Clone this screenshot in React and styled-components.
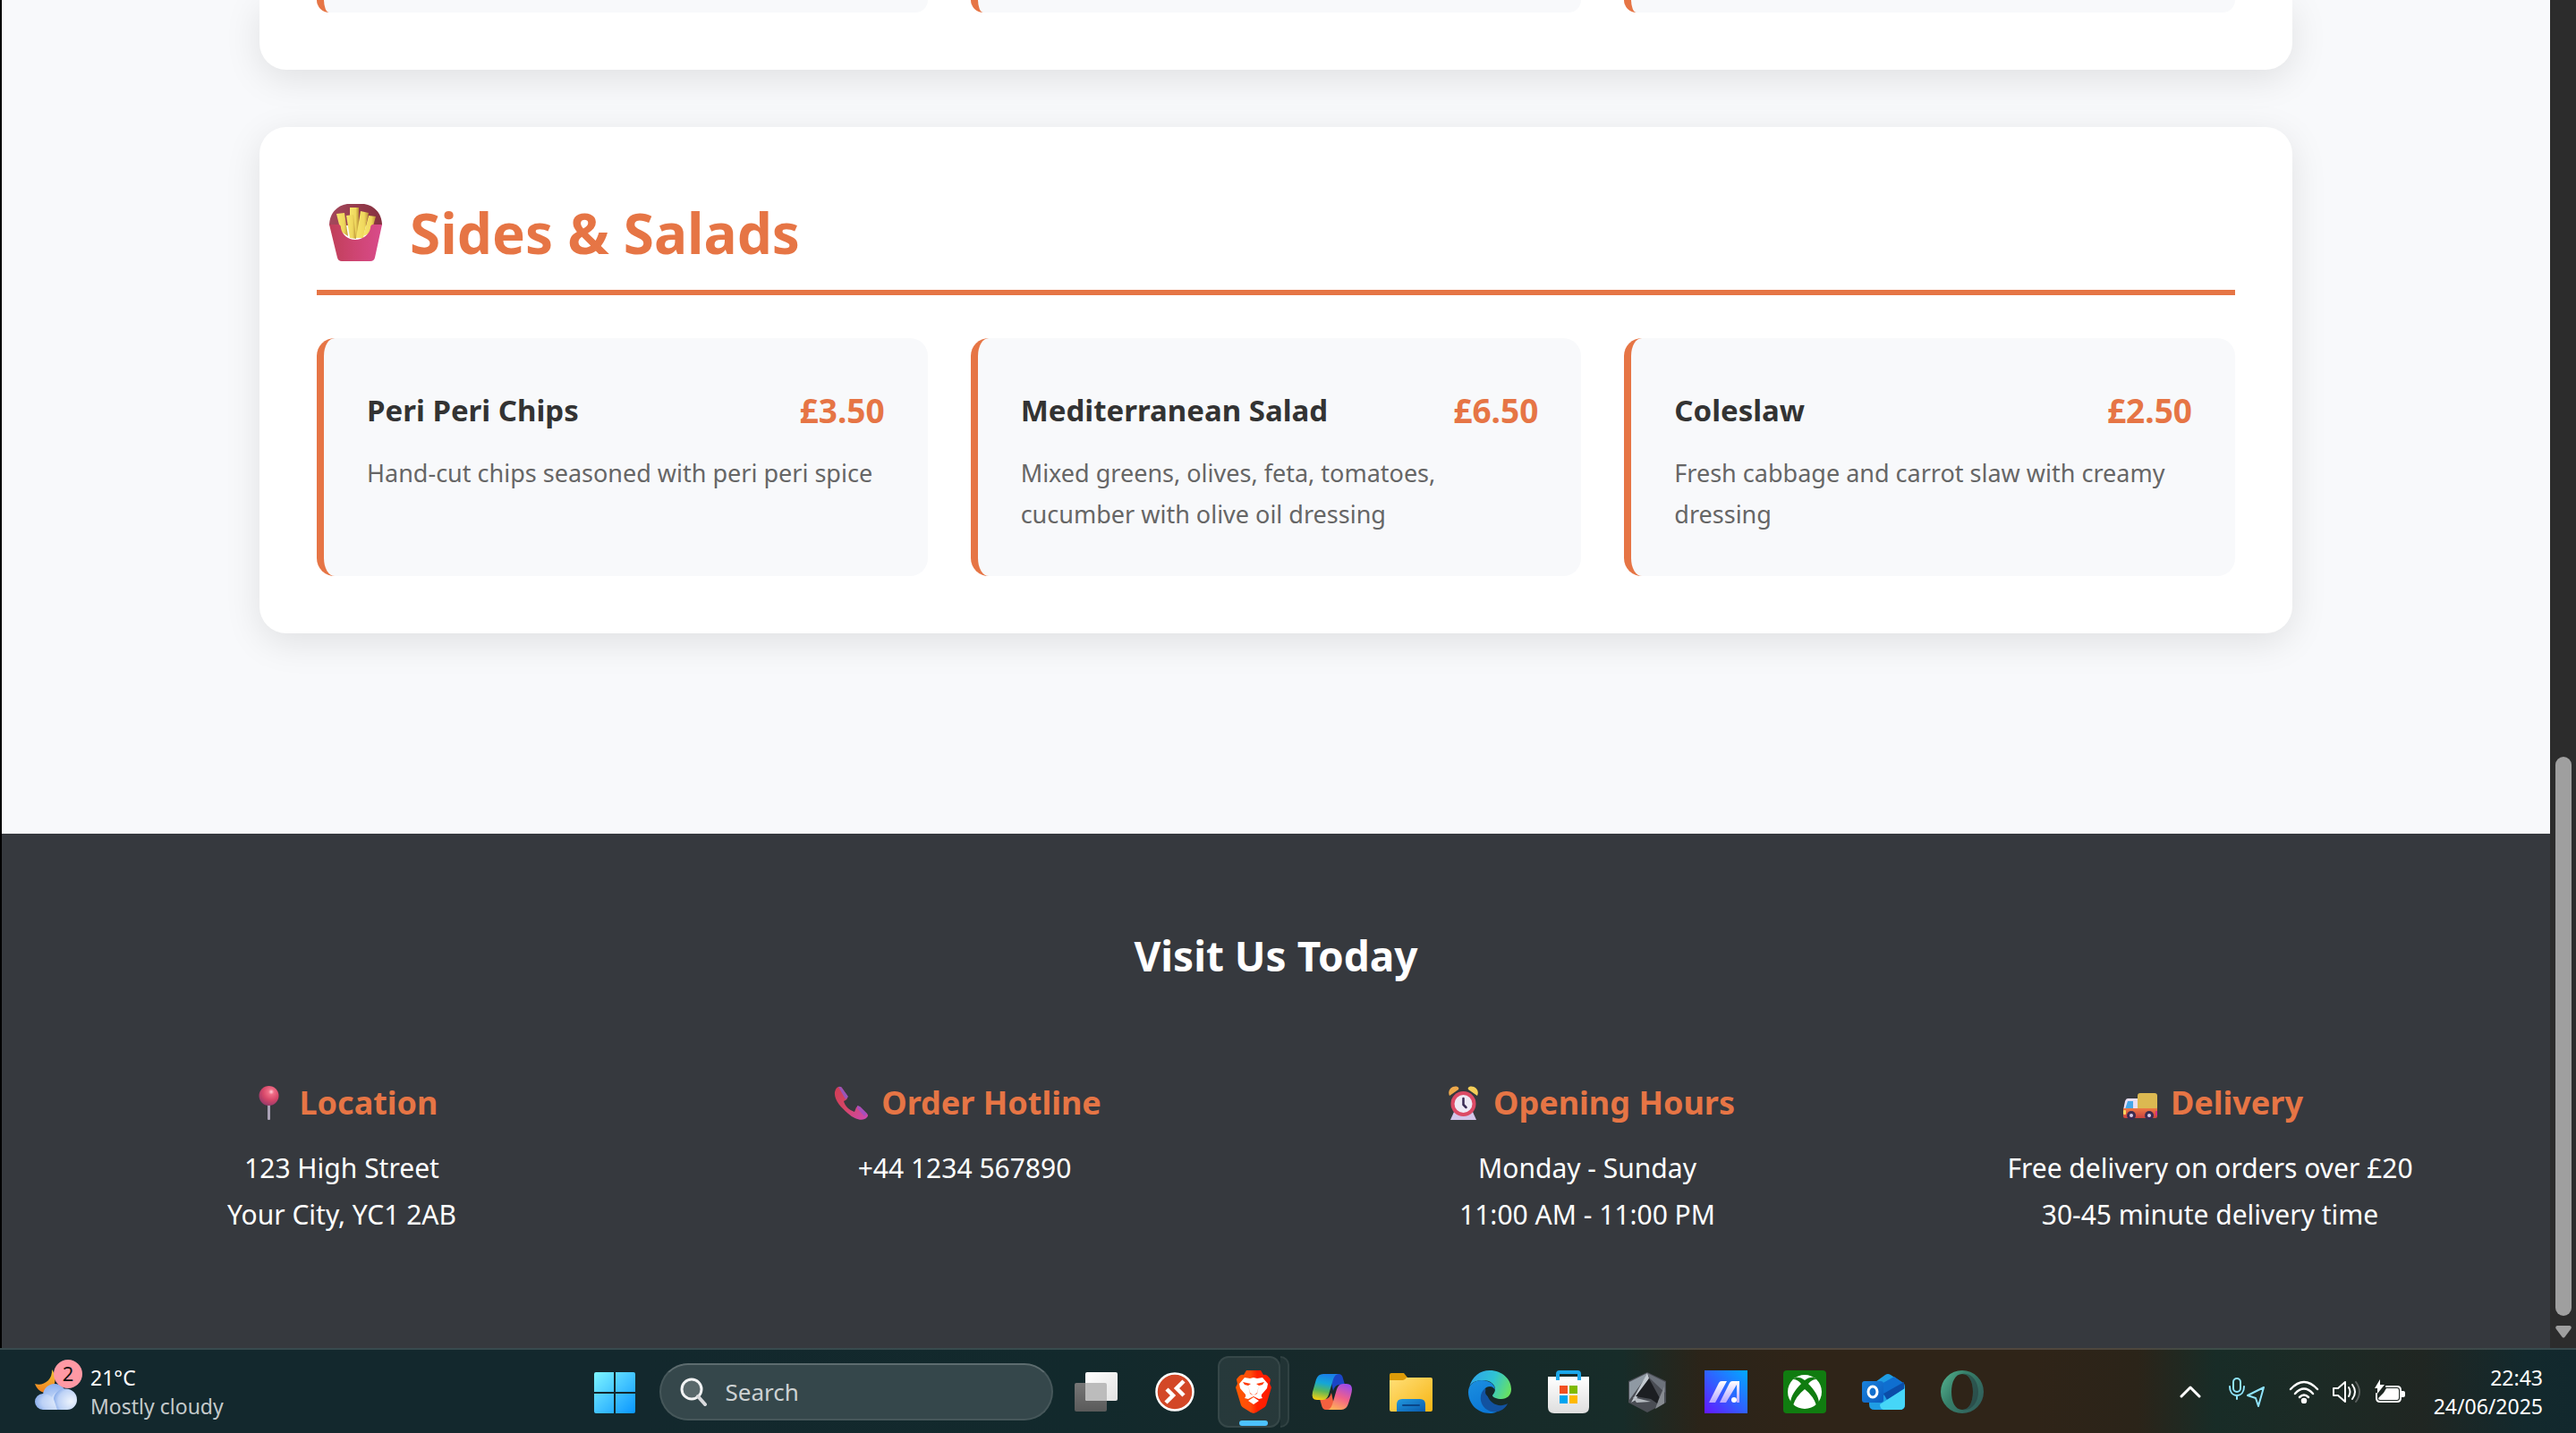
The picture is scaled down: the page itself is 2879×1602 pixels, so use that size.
import React from "react";
import styled, { createGlobalStyle } from "styled-components";

const orange = "#e67545";
const pageGrey = "#f8f9fb";
const charcoal = "#36393e";

const GlobalStyle = createGlobalStyle`
  *, *::before, *::after { box-sizing: border-box; }
  body { margin: 0; font-family: "Noto Sans", "Open Sans", sans-serif; color: #333; }
  h2, h3, h4, p { margin: 0; }
  button, input { font: inherit; }
`;

/* ---------- shell ---------- */

const Desktop = styled.div`
  height: 100vh;
  display: flex;
  flex-direction: column;
  overflow: hidden;
`;

const Window = styled.div`
  flex: 1;
  min-height: 0;
  display: flex;
  border-left: 2px solid #000;
`;

const Page = styled.div`
  flex: 1;
  min-width: 0;
  display: flex;
  flex-direction: column;
  overflow: hidden;
  background: ${pageGrey};
`;

const Scrollbar = styled.div`
  width: 29px;
  display: flex;
  flex-direction: column;
  align-items: center;
  background: #2c2c2c;
`;

const Track = styled.div`
  flex: 1;
  display: flex;
  flex-direction: column;
  justify-content: flex-end;
  width: 18px;
`;

const Thumb = styled.div`
  height: 42.5%;
  border-radius: 9px;
  background: #9f9f9f;
`;

const ScrollButton = styled.button`
  height: 36px;
  width: 18px;
  padding: 0;
  border: 0;
  background: none;
  display: grid;
  place-items: center;
`;

/* ---------- menu ---------- */

const Menu = styled.main`
  width: 100%;
  max-width: 2400px;
  margin: 0 auto;
  padding: 0 64px 160px;
`;

const Category = styled.section`
  margin-bottom: 64px;
  padding: ${(p) => (p.$cut ? "0 64px 64px" : "64px")};
  border-radius: ${(p) => (p.$cut ? "0 0 30px 30px" : "30px")};
  background: #fff;
  box-shadow: 0 10px 40px rgba(0, 0, 0, 0.1);
`;

const CategoryTitle = styled.h2`
  display: flex;
  align-items: center;
  gap: 16px;
  margin-bottom: 48px;
  padding-bottom: 10px;
  border-bottom: 6px solid ${orange};
  color: ${orange};
  font-size: 62px;
  line-height: 108px;
  font-weight: 700;
`;

const Items = styled.div`
  display: grid;
  grid-template-columns: repeat(3, 1fr);
  gap: 48px;
`;

const Item = styled.article`
  padding: 50px 48px 46px;
  border-left: 8px solid ${orange};
  border-radius: 20px;
  background: ${pageGrey};
`;

const ItemTail = styled.div`
  height: 14px;
  border-left: 8px solid ${orange};
  border-radius: 0 0 20px 20px;
  background: ${pageGrey};
`;

const ItemHead = styled.div`
  display: flex;
  justify-content: space-between;
  align-items: center;
  margin-bottom: 16px;
`;

const ItemName = styled.h3`
  font-size: 33px;
  line-height: 56px;
  font-weight: 700;
`;

const Price = styled.span`
  color: ${orange};
  font-size: 37px;
  line-height: 62px;
  font-weight: 700;
`;

const Description = styled.p`
  color: #666;
  font-size: 27px;
  line-height: 46px;
`;

/* ---------- footer ---------- */

const Footer = styled.footer`
  flex: 1;
  padding: 98px 64px 96px;
  background: ${charcoal};
  color: #fff;
  text-align: center;
`;

const FooterTitle = styled.h2`
  margin-bottom: 96px;
  font-size: 46px;
  line-height: 76px;
  font-weight: 700;
`;

const Contacts = styled.div`
  display: grid;
  grid-template-columns: repeat(4, 1fr);
  gap: 64px;
`;

const ContactTitle = styled.h3`
  display: flex;
  justify-content: center;
  align-items: center;
  gap: 8px;
  margin-bottom: 16px;
  color: ${orange};
  font-size: 36px;
  line-height: 62px;
  font-weight: 700;
`;

const ContactLine = styled.p`
  font-size: 30px;
  line-height: 52px;
`;

/* ---------- taskbar ---------- */

const Bar = styled.nav`
  display: grid;
  grid-template-columns: 1fr auto 1fr;
  align-items: center;
  height: 95px;
  border-top: 2px solid rgba(255, 255, 255, 0.16);
  background: linear-gradient(90deg, #13282d 0%, #13282d 25%, #12292c 42%, #17292a 52%, #172c29 63%, #2b2419 66%, #2f2418 70%, #2f2418 79%, #2b2419 83%, #182c27 86%, #1c2a25 90%, #202622 94%, #13292d 98%, #12282d 100%);
  color: #fff;
`;

const Weather = styled.button`
  justify-self: start;
  display: flex;
  align-items: center;
  gap: 8px;
  margin-left: 36px;
  padding: 0;
  border: 0;
  background: none;
  color: #fff;
  text-align: left;
`;

const SmallText = styled.span`
  display: block;
  font-size: 23px;
  line-height: 32px;
  color: ${(p) => (p.$dim ? "#c4cacb" : "#fff")};
`;

const Apps = styled.div`
  display: flex;
  align-items: center;
`;

const AppButton = styled.button`
  display: grid;
  place-items: center;
  width: 88px;
  height: 80px;
  padding: 0;
  border: 0;
  background: none;
`;

const ActiveSlot = styled.div`
  position: relative;
  display: flex;
  width: 80px;
  height: 80px;
  margin: 0 4px;
`;

const ActiveApp = styled.button`
  width: 70px;
  height: 80px;
  padding: 0 0 0 10px;
  display: grid;
  place-items: center;
  border: 2px solid rgba(255, 255, 255, 0.07);
  border-radius: 12px;
  background: rgba(255, 255, 255, 0.08);
  &::after {
    content: "";
    position: absolute;
    left: 24px;
    bottom: 2px;
    width: 32px;
    height: 6px;
    border-radius: 3px;
    background: #4cc2ff;
  }
`;

const StackEdge = styled.span`
  width: 10px;
  border: 2px solid rgba(255, 255, 255, 0.07);
  border-left: 0;
  border-radius: 0 12px 12px 0;
  background: rgba(255, 255, 255, 0.05);
`;

const SearchBox = styled.label`
  display: flex;
  align-items: center;
  gap: 20px;
  width: 440px;
  height: 64px;
  margin: 0 4px 0 6px;
  padding: 0 20px;
  border: 2px solid #46575a;
  border-top-color: #5d6c6f;
  border-radius: 32px;
  background: #35474b;
`;

const SearchInput = styled.input`
  flex: 1;
  min-width: 0;
  padding: 0;
  border: 0;
  outline: 0;
  background: none;
  color: #fff;
  font-size: 26px;
  line-height: 36px;
  &::placeholder { color: #cdd2d3; opacity: 1; }
`;

const Tray = styled.div`
  justify-self: end;
  display: flex;
  align-items: center;
  gap: 14px;
  margin-right: 37px;
`;

const TrayButton = styled.button`
  display: flex;
  align-items: center;
  gap: 14px;
  padding: 0;
  border: 0;
  background: none;
  margin-right: ${(p) => p.$space || 0}px;
`;

const Clock = styled.time`
  text-align: right;
`;

/* ---------- emoji drawings ---------- */

const Fries = () => (
  <svg width="88" height="64" viewBox="0 0 88 64" aria-hidden="true">
    <defs>
      <linearGradient id="fBox" x1="0" x2="1"><stop offset="0" stopColor="#c03f58" /><stop offset=".45" stopColor="#cd4470" /><stop offset="1" stopColor="#d94b8b" /></linearGradient>
      <linearGradient id="fBack" x1="0" x2="1"><stop offset="0" stopColor="#a5485c" /><stop offset="1" stopColor="#85303f" /></linearGradient>
      <linearGradient id="fFry" x1="0" x2="1"><stop offset="0" stopColor="#f7e66c" /><stop offset=".65" stopColor="#efd75d" /><stop offset="1" stopColor="#b98f35" /></linearGradient>
    </defs>
    <path d="M14 24C14 9 25 0 36 0h15C62 0 73 9 73 24Z" fill="url(#fBack)" />
    <path d="m22 11 9-1 4 26-8-5Z" fill="url(#fFry)" />
    <path d="M37 4h10v34H37Z" fill="url(#fFry)" />
    <path d="m49 8 9 2-6 28h-8Z" fill="url(#fFry)" />
    <path d="m58 13 8 1-5 18-9 4Z" fill="url(#fFry)" />
    <path d="m33 13 8-1 3 27-7-1Z" fill="url(#fFry)" />
    <path d="M14 23h10q3 0 3 4c1 7 8 13 16 13s16-6 17-13q0-4 3-4h10l-8 37q-1 4-5 4H28q-4 0-5-4Z" fill="url(#fBox)" />
  </svg>
);

const Pin = () => (
  <svg width="52" height="38" viewBox="0 0 52 38" aria-hidden="true">
    <defs><radialGradient id="pinBall" cx=".62" cy=".3" r=".7"><stop offset="0" stopColor="#ffd0da" /><stop offset=".2" stopColor="#ef6d86" /><stop offset=".6" stopColor="#d64769" /><stop offset="1" stopColor="#9e3a6a" /></radialGradient></defs>
    <rect x="25" y="20" width="3" height="18" rx="1" fill="#aaa2b6" />
    <circle cx="26.500" cy="11" r="11" fill="url(#pinBall)" />
  </svg>
);

const Phone = () => (
  <svg width="52" height="38" viewBox="0 0 52 38" aria-hidden="true">
    <defs><linearGradient id="phoneFill" x1="0" y1="0" x2="1" y2="1"><stop offset="0" stopColor="#cf3c55" /><stop offset=".5" stopColor="#d64667" /><stop offset="1" stopColor="#cb48b4" /></linearGradient></defs>
    <path d="M12 1q2-1 4 1l6 9q1 3-2 5l-2 1c1 5 6 10 12 12l2-5q2-3 5 0l7 7q2 2 0 4c-4 5-13 3-21-4S7 16 8 7q1-5 4-6Z" fill="url(#phoneFill)" />
    <path d="m12 1 3 0 8 11-3 3Z" fill="#9a55b8" />
    <path d="m33 22 3 1 8 8-3 3-8-9Z" fill="#a64fbc" />
  </svg>
);

const Alarm = () => (
  <svg width="52" height="38" viewBox="0 0 52 38" aria-hidden="true">
    <path d="m12 38 4-9h21l4 9Z" fill="#d3c5ea" />
    <path d="M11 11C8 5 14-1 20 1q2 1 1 3Z" fill="#efa94b" />
    <path d="M42 11C45 5 39-1 33 1q-2 1-1 3Z" fill="#f5cf58" />
    <circle cx="26.500" cy="20" r="14" fill="#dc4a66" />
    <circle cx="26.500" cy="20" r="10" fill="#efe9f6" />
    <path d="M26.500 14v7l3 3" fill="none" stroke="#3b2b55" strokeWidth="2.500" strokeLinecap="round" />
  </svg>
);

const Truck = () => (
  <svg width="52" height="38" viewBox="0 0 52 38" aria-hidden="true">
    <defs><linearGradient id="truckBase" x1="0" y1="0" x2="0" y2="1"><stop offset="0" stopColor="#ee7a44" /><stop offset="1" stopColor="#c9403f" /></linearGradient></defs>
    <path d="M12 14h12v13H7l2-10q1-3 3-3Z" fill="#e9dff3" />
    <path d="M12 17h6v9H9Z" fill="#46a7e8" />
    <rect x="23" y="8" width="22" height="19" rx="3" fill="#dcb951" />
    <path d="M7 25h38v9q0 2-2 2H9q-2 0-2-2Z" fill="url(#truckBase)" />
    <rect x="7" y="27" width="3" height="5" rx="1" fill="#ffd45e" />
    <rect x="43" y="28" width="2" height="5" fill="#d92f83" />
    <circle cx="16" cy="33" r="5" fill="#3a2c52" /><circle cx="16" cy="33" r="2" fill="#d7cbe8" />
    <circle cx="36" cy="33" r="5" fill="#3a2c52" /><circle cx="36" cy="33" r="2" fill="#d7cbe8" />
  </svg>
);

/* ---------- taskbar drawings ---------- */

const WeatherIcon = () => (
  <svg width="57" height="72" viewBox="0 0 57 72" aria-hidden="true">
    <defs>
      <linearGradient id="moon" x1="0" y1="0" x2="0" y2="1"><stop offset="0" stopColor="#f4c63c" /><stop offset="1" stopColor="#f07f1c" /></linearGradient>
      <radialGradient id="cloudA" cx=".5" cy=".8" r=".8"><stop offset="0" stopColor="#cfe0fa" /><stop offset="1" stopColor="#8fb1ee" /></radialGradient>
      <radialGradient id="cloudB" cx=".75" cy=".6" r=".8"><stop offset="0" stopColor="#eef4fd" /><stop offset=".7" stopColor="#bdd2f6" /><stop offset="1" stopColor="#7fa5e8" /></radialGradient>
    </defs>
    <path d="M22 11c5 7 5 18-2 24-5 4-13 2-17-8 9 3 20-4 19-16Z" fill="url(#moon)" />
    <circle cx="25" cy="40" r="13" fill="url(#cloudA)" />
    <path d="M12 38q6 0 10 4c2-5 7-8 13-8a11 11 0 0 1 0 22H12a9 9 0 0 1 0-18Z" fill="url(#cloudB)" />
    <path d="M24 44a13 12 0 0 1 26 1 11 11 0 0 1-11 11H28Z" fill="url(#cloudB)" />
    <circle cx="40" cy="16" r="16" fill="#ff99a4" />
    <text x="40" y="24" textAnchor="middle" fontSize="22" fill="#111">2</text>
  </svg>
);

const Icon = ({ children }) => (
  <svg width="48" height="48" viewBox="0 0 48 48" aria-hidden="true">{children}</svg>
);

const StartIcon = () => (
  <Icon>
    <defs><linearGradient id="win" gradientUnits="userSpaceOnUse" x1="1" y1="1" x2="47" y2="47"><stop offset="0" stopColor="#7ff6ff" /><stop offset=".5" stopColor="#45c6ff" /><stop offset="1" stopColor="#0a97ff" /></linearGradient></defs>
    <g fill="url(#win)">
      <path d="M3 2h20v22H1V4q0-2 2-2ZM25 2h20q2 0 2 2v20H25ZM1 26h22v22H3q-2 0-2-2ZM25 26h22v20q0 2-2 2H25Z" />
    </g>
  </Icon>
);

const SearchIcon = () => (
  <svg width="32" height="32" viewBox="0 0 32 32" aria-hidden="true">
    <circle cx="14" cy="13" r="11" fill="rgba(255,255,255,.18)" stroke="#f2f3f4" strokeWidth="3" />
    <path d="m21 21 8 9" stroke="#d9dadd" strokeWidth="4" strokeLinecap="round" />
  </svg>
);

const TaskViewIcon = () => (
  <Icon>
    <defs>
      <linearGradient id="tvA" x1="0" y1="0" x2="1" y2="1"><stop offset="0" stopColor="#fff" /><stop offset="1" stopColor="#e2e2e2" /></linearGradient>
      <linearGradient id="tvB" x1="0" y1="0" x2="0" y2="1"><stop offset="0" stopColor="#767676" /><stop offset="1" stopColor="#5a5a5a" /></linearGradient>
    </defs>
    <rect y="14" width="36" height="32" rx="2" fill="url(#tvB)" />
    <rect x="12" y="2" width="36" height="32" rx="2" fill="url(#tvA)" />
    <path d="M12 14h22q2 0 2 2v18H14q-2 0-2-2Z" fill="#bcbcbc" />
  </Icon>
);

const RemoteIcon = () => (
  <Icon>
    <circle cx="24" cy="24" r="20.500" fill="#d34727" stroke="#fff" strokeWidth="2.500" />
    <path d="m15 21 7 7-8 8M34 12l-8 8 8 8" fill="none" stroke="#fff" strokeWidth="4.500" />
  </Icon>
);

const BraveIcon = () => (
  <Icon>
    <defs><linearGradient id="brave" x1="0" x2="1"><stop offset="0" stopColor="#ff5a00" /><stop offset=".42" stopColor="#ff4a0b" /><stop offset=".6" stopColor="#ff2000" /><stop offset="1" stopColor="#ff1c00" /></linearGradient></defs>
    <path d="m16 0h16l3 5q4-1 8 5l-1 5 2 4-6 20q-1 2-3 3l-8 5-3 1-3-1-8-5q-2-1-3-3L4 19l2-4-1-5q4-6 8-5Z" fill="url(#brave)" />
    <path d="m14 8 6 1 4-1 4 1 6-1 6 7-1 5-6 7q-1 2 1 4l-4 1-6-3-6 3-4-1q2-2 1-4l-6-7-1-5Z" fill="#fff" />
    <path d="m12 13 9 2-3 2 2 8 4 3 4-3 2-8-3-2 9-2-2 3-4 1-2 9-4 2-4-2-2-9-4-1Z" fill="#ff3a0a" />
    <path d="m24 30 6 4-6 4-6-4Z" fill="#fff" />
  </Icon>
);

const CopilotIcon = () => (
  <Icon>
    <defs>
      <linearGradient id="cpA" x1=".5" y1="0" x2=".3" y2="1"><stop offset="0" stopColor="#1a7fe8" /><stop offset=".35" stopColor="#14a6d8" /><stop offset=".65" stopColor="#57b65b" /><stop offset="1" stopColor="#f5cf13" /></linearGradient>
      <linearGradient id="cpB" x1=".7" y1="0" x2=".3" y2="1"><stop offset="0" stopColor="#a04be8" /><stop offset=".5" stopColor="#f0608a" /><stop offset="1" stopColor="#ffb057" /></linearGradient>
    </defs>
    <path d="M21 4h10q4 0 5 5l2 7h-6q-5 0-7 7Z" fill="#1b45c6" />
    <path d="M27 44H17q-4 0-5-5l-2-7h6q5 0 7-7Z" fill="#f2603f" />
    <path d="M14 4h17q-4 0-6 6l-5 17q-2 6-7 6H7q-7 0-5-9l4-14q2-6 8-6Z" fill="url(#cpA)" />
    <path d="M34 44H18q4 0 6-6l5-17q2-6 7-6h4q6 0 6 6 0 4-4 16-2 7-8 7Z" fill="url(#cpB)" />
  </Icon>
);

const FolderIcon = () => (
  <Icon>
    <defs>
      <linearGradient id="fold" x1="0" y1="0" x2="1" y2="1"><stop offset="0" stopColor="#ffdf78" /><stop offset="1" stopColor="#f7b514" /></linearGradient>
      <linearGradient id="foldB" x1="0" y1="0" x2="1" y2="1"><stop offset="0" stopColor="#2199df" /><stop offset="1" stopColor="#0a5bae" /></linearGradient>
    </defs>
    <path d="M2 3h14l4 5h10v8H0V5q0-2 2-2Z" fill="#dd9b08" />
    <path d="M0 11h15q2 0 4-3h27q2 0 2 2v34q0 2-2 2H2q-2 0-2-2Z" fill="url(#fold)" />
    <path d="M14 32h20q6 0 6 6v8H8v-8q0-6 6-6Z" fill="url(#foldB)" />
    <rect x="14" y="38" width="20" height="2" rx="1" fill="#0a4688" />
  </Icon>
);

const EdgeIcon = () => (
  <Icon>
    <defs>
      <linearGradient id="edA" x1="0" y1=".4" x2="1" y2=".7"><stop offset="0" stopColor="#2ea6e9" /><stop offset=".5" stopColor="#2fc3d4" /><stop offset="1" stopColor="#6be25c" /></linearGradient>
      <linearGradient id="edB" x1="0" y1="0" x2=".4" y2="1"><stop offset="0" stopColor="#1b8fe0" /><stop offset="1" stopColor="#0c78d6" /></linearGradient>
    </defs>
    <path d="M1 19C4 7 13 0 24 0c14 0 24 10 24 21 0 7-5 11-11 11-5 0-10-2-10-4 0-1 3-3 3-7 0-5-5-10-14-10S2 15 1 19Z" fill="url(#edA)" />
    <path d="M0 24c0-8 7-13 15-13 9 0 15 5 15 11-1-2-3-4-6-4-5 0-8 5-8 10 0 10 8 17 16 18-3 2-6 2-8 2C10 48 0 37 0 24Z" fill="url(#edB)" />
    <path d="M19 20c-8 6-7 20 4 25 9 4 18-1 21-8-5 3-12 3-17-1-4-3-6-7-8-16Z" fill="#1252a0" />
    <path d="M24 19q-5 1-5 6 1 5 8 5-1-2 1-4 2-5-4-7Z" fill="#16272a" />
  </Icon>
);

const StoreIcon = () => (
  <Icon>
    <defs><linearGradient id="bag" x1="0" y1="0" x2="0" y2="1"><stop offset="0" stopColor="#fff" /><stop offset="1" stopColor="#dedede" /></linearGradient></defs>
    <path d="M1 7h46v34q0 7-7 7H8q-7 0-7-7Z" fill="url(#bag)" />
    <path d="M12 11V4q0-2 2-2h20q2 0 2 2v7" fill="none" stroke="#1ba7ea" strokeWidth="4" />
    <path fill="#f25022" d="M14 17h9v9h-9z" /><path fill="#7fba00" d="M25 17h9v9h-9z" />
    <path fill="#00a4ef" d="M14 28h9v9h-9z" /><path fill="#ffb900" d="M25 28h9v9h-9z" />
  </Icon>
);

const ArmouryIcon = () => (
  <Icon>
    <path d="m24 2 21 10v24L24 47 3 36V12Z" fill="#4a4d54" />
    <path d="M24 3 4 13v20l16-22Z" fill="#8f99a3" />
    <path d="m24 3 20 10v12L27 9Z" fill="#6c727b" />
    <path d="M24 3 6 36l5-3L26 9Z" fill="#c3cad1" />
    <path d="m26 9 13 24-1 6-10-7-17-3Z" fill="#1c1e22" />
    <path d="m8 30 20 5-16 1Z" fill="#b5bac0" />
    <path d="m33 43 10-6V18l-6 14Z" fill="#878b91" />
  </Icon>
);

const MyAsusIcon = () => (
  <Icon>
    <defs>
      <linearGradient id="asus" x1="0" y1="1" x2="1" y2="0"><stop offset="0" stopColor="#6416ff" /><stop offset=".5" stopColor="#2f62ff" /><stop offset="1" stopColor="#00abff" /></linearGradient>
      <linearGradient id="asusM" x1="0" y1="1" x2="0" y2="0"><stop offset="0" stopColor="#b7a7ff" /><stop offset="1" stopColor="#fff" /></linearGradient>
    </defs>
    <path d="M0 0h48v48H0z" fill="url(#asus)" />
    <path d="m5 36 11-22q1-2 3-2h6L12 36ZM17 36l11-22q1-2 3-2h8v24h-3V16L24 36Z" fill="url(#asusM)" />
    <circle cx="33" cy="33" r="3" fill="#fff" />
  </Icon>
);

const XboxIcon = () => (
  <Icon>
    <rect width="48" height="48" rx="4" fill="#107c10" />
    <circle cx="24" cy="24" r="19" fill="#fff" />
    <path d="M14 8q5-1 10 3 5-4 10-3l3 2q-5 0-9 5c6 6 12 14 12 22l-3 2q-3-10-13-18-10 8-13 18l-3-2c0-8 6-16 12-22q-4-5-9-5Z" fill="#107c10" />
  </Icon>
);

const OutlookIcon = () => (
  <Icon>
    <defs><linearGradient id="olk" x1="0" y1="0" x2="1" y2="1"><stop offset="0" stopColor="#1a83dc" /><stop offset="1" stopColor="#0b5cc0" /></linearGradient></defs>
    <path d="M8 18 26 5q3-2 6 0l14 9q2 1 2 4v20q0 6-6 6H14q-6 0-6-6Z" fill="#1f9de4" />
    <path d="m20 16 16-9 10 7-22 14Z" fill="#0f6fd0" />
    <path d="m24 26 23-13v8L28 33Z" fill="#0b4da8" />
    <path d="m20 38 28-18v18q0 6-6 6H24q-4-1-4-6Z" fill="#46d6f8" />
    <rect y="12" width="24" height="24" rx="3" fill="url(#olk)" />
    <ellipse cx="12" cy="24" rx="5" ry="6" fill="none" stroke="#fff" strokeWidth="3" />
  </Icon>
);

const OperaIcon = () => (
  <Icon>
    <defs>
      <linearGradient id="opA" x1="0" y1="0" x2="1" y2=".6"><stop offset="0" stopColor="#57b793" /><stop offset=".45" stopColor="#37806a" /><stop offset="1" stopColor="#31605b" /></linearGradient>
    </defs>
    <path fillRule="evenodd" d="M24 0a24 24 0 1 1 0 48 24 24 0 0 1 0-48Zm0 4C16 4 12 13 12 24s4 20 12 20 12-9 12-20S32 4 24 4Z" fill="url(#opA)" />
    <path d="M24 4c8 0 12 9 12 20s-4 20-12 20c10 2 18-8 18-20S34 2 24 4Z" fill="#24383a" opacity=".5" />
  </Icon>
);

const stroke = { fill: "none", strokeLinecap: "round", strokeLinejoin: "round" };

const ChevronUp = () => (
  <svg width="24" height="16" viewBox="0 0 24 16" aria-hidden="true"><path d="m2 13 10-10 10 10" {...stroke} stroke="#fff" strokeWidth="3" /></svg>
);
const MicLocation = () => (
  <svg width="42" height="34" viewBox="0 0 42 34" aria-hidden="true" {...stroke} stroke="#8fe3fb" strokeWidth="2">
    <rect x="6" y="2" width="8" height="15" rx="4" />
    <path d="M2 11c0 6 3 10 8 10s8-4 8-10M10 21v4M40 12 22 21l9 3 3 9Z" />
  </svg>
);
const Wifi = () => (
  <svg width="34" height="26" viewBox="0 0 34 26" aria-hidden="true" {...stroke} stroke="#fff" strokeWidth="2.500">
    <path d="M2 10q15-16 30 0M7 15q10-11 20 0M12 19q5-5 10 0" /><circle cx="17" cy="23" r="2" fill="#fff" />
  </svg>
);
const Speaker = () => (
  <svg width="34" height="28" viewBox="0 0 34 28" aria-hidden="true" {...stroke} stroke="#fff" strokeWidth="2">
    <path d="M2 10h5l8-7v22l-8-7H2ZM19 9q3 5 0 10M23 6q6 8 0 16" /><path d="M27 3q8 11 0 22" stroke="#5b605e" />
  </svg>
);
const Battery = () => (
  <svg width="34" height="28" viewBox="0 0 34 28" aria-hidden="true">
    <path d="M13 8h12q4 0 4 4v9q0 4-4 4H6q-4 0-4-4v-5" {...stroke} stroke="#fff" strokeWidth="2" />
    <path d="M13 10h12q2 0 2 3v7q0 3-2 3H6q-2 0-2-2l6-6Z" fill="#fff" />
    <path d="M6 0v6h5L3 16v-6H0Z" fill="#fff" /><path d="M30 13h2q2 0 2 2v3q0 2-2 2h-2Z" fill="#fff" />
  </svg>
);

/* ---------- data ---------- */

const sides = [
  { name: "Peri Peri Chips", price: "£3.50", text: "Hand-cut chips seasoned with peri peri spice" },
  { name: "Mediterranean Salad", price: "£6.50", text: "Mixed greens, olives, feta, tomatoes, cucumber with olive oil dressing" },
  { name: "Coleslaw", price: "£2.50", text: "Fresh cabbage and carrot slaw with creamy dressing" },
];

const contacts = [
  { Art: Pin, title: "Location", lines: ["123 High Street", "Your City, YC1 2AB"] },
  { Art: Phone, title: "Order Hotline", lines: ["+44 1234 567890"] },
  { Art: Alarm, title: "Opening Hours", lines: ["Monday - Sunday", "11:00 AM - 11:00 PM"] },
  { Art: Truck, title: "Delivery", lines: ["Free delivery on orders over £20", "30-45 minute delivery time"] },
];

const pinnedBefore = [["Task view", TaskViewIcon], ["Remote Desktop", RemoteIcon]];
const pinnedAfter = [
  ["Copilot", CopilotIcon], ["File Explorer", FolderIcon], ["Edge", EdgeIcon], ["Microsoft Store", StoreIcon],
  ["Armoury Crate", ArmouryIcon], ["MyASUS", MyAsusIcon], ["Xbox", XboxIcon], ["Outlook", OutlookIcon], ["Opera", OperaIcon],
];

const AppLink = ({ label, Art }) => (
  <AppButton type="button" aria-label={label}><Art /></AppButton>
);

export default function App() {
  return (
    <Desktop>
      <GlobalStyle />
      <Window>
        <Page>
          <Menu>
            <Category $cut>
              <Items><ItemTail /><ItemTail /><ItemTail /></Items>
            </Category>
            <Category>
              <CategoryTitle><Fries />Sides &amp; Salads</CategoryTitle>
              <Items>
                {sides.map((s) => (
                  <Item key={s.name}>
                    <ItemHead><ItemName>{s.name}</ItemName><Price>{s.price}</Price></ItemHead>
                    <Description>{s.text}</Description>
                  </Item>
                ))}
              </Items>
            </Category>
          </Menu>
          <Footer>
            <FooterTitle>Visit Us Today</FooterTitle>
            <Contacts>
              {contacts.map(({ Art, title, lines }) => (
                <div key={title}>
                  <ContactTitle><Art />{title}</ContactTitle>
                  {lines.map((l) => <ContactLine key={l}>{l}</ContactLine>)}
                </div>
              ))}
            </Contacts>
          </Footer>
        </Page>
        <Scrollbar>
          <Track><Thumb /></Track>
          <ScrollButton type="button" aria-label="Scroll down">
            <svg width="18" height="14" viewBox="0 0 18 14" aria-hidden="true"><path d="M2 0h14q3 1 1 4l-6 8q-2 3-4 0L1 4q-2-3 1-4Z" fill="#9f9f9f" /></svg>
          </ScrollButton>
        </Scrollbar>
      </Window>
      <Bar>
        <Weather type="button">
          <WeatherIcon />
          <span><SmallText>21°C</SmallText><SmallText $dim>Mostly cloudy</SmallText></span>
        </Weather>
        <Apps>
          <AppButton type="button" aria-label="Start"><StartIcon /></AppButton>
          <SearchBox><SearchIcon /><SearchInput type="text" placeholder="Search" aria-label="Search" /></SearchBox>
          {pinnedBefore.map(([label, Art]) => <AppLink key={label} label={label} Art={Art} />)}
          <ActiveSlot><ActiveApp type="button" aria-label="Brave"><BraveIcon /></ActiveApp><StackEdge /></ActiveSlot>
          {pinnedAfter.map(([label, Art]) => <AppLink key={label} label={label} Art={Art} />)}
        </Apps>
        <Tray>
          <TrayButton type="button" aria-label="Hidden icons" $space={16}><ChevronUp /></TrayButton>
          <TrayButton type="button" aria-label="Microphone and location in use" $space={12}><MicLocation /></TrayButton>
          <TrayButton type="button" aria-label="Network, volume, battery" $space={18}><Wifi /><Speaker /><Battery /></TrayButton>
          <Clock dateTime="2025-06-24T22:43"><SmallText>22:43</SmallText><SmallText>24/06/2025</SmallText></Clock>
        </Tray>
      </Bar>
    </Desktop>
  );
}
